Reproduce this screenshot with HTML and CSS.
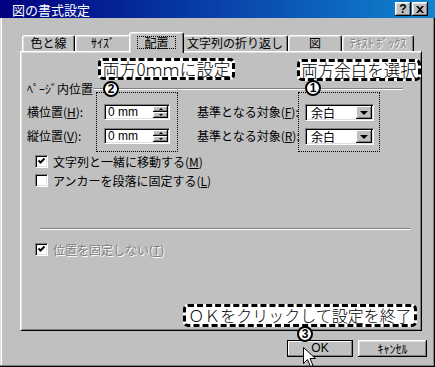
FILE: index.html
```html
<!DOCTYPE html>
<html lang="ja">
<head>
    <meta charset="UTF-8">
    <title>図の書式設定</title>
    <link rel="stylesheet" href="styles.css">
</head>
<body>
<div class="window">
    <div class="titlebar">
        <span class="title">図の書式設定</span>
        <div class="tb-buttons">
            <span class="tb-btn help">?</span>
            <span class="tb-btn">
                <svg width="8" height="7" viewBox="0 0 8 7"><path d="M0 0h2l2 2 2-2h2L5 3.5 8 7H6L4 5 2 7H0l3-3.5z" fill="#000"/></svg>
            </span>
        </div>
    </div>

    <div class="tabs">
        <div class="tab t1">色と線</div>
        <div class="tab t2">ｻｲｽﾞ</div>
        <div class="tab t3 active"><span class="focus">配置</span></div>
        <div class="tab t4">文字列の折り返し</div>
        <div class="tab t5">図</div>
        <div class="tab t6 disabled">ﾃｷｽﾄ ﾎﾞｯｸｽ</div>
    </div>

    <div class="panel">
        <div class="group-head">
            <span>ﾍﾟｰｼﾞ内位置</span>
            <div class="etch"></div>
        </div>

        <div class="pos-row">
            <div class="lbl-col">
                <label>横位置(<u>H</u>):</label>
                <label>縦位置(<u>V</u>):</label>
            </div>
            <div class="dot-box spins">
                <div class="spin"><span class="val">0 mm</span><span class="spin-btns"><i class="up"></i><i class="down"></i></span></div>
                <div class="spin"><span class="val">0 mm</span><span class="spin-btns"><i class="up"></i><i class="down"></i></span></div>
            </div>
            <div class="lbl-col right">
                <label>基準となる対象(<u>F</u>):</label>
                <label>基準となる対象(<u>R</u>):</label>
            </div>
            <div class="dot-box combos">
                <div class="combo"><span class="val">余白</span><span class="drop"><i></i></span></div>
                <div class="combo"><span class="val">余白</span><span class="drop"><i></i></span></div>
            </div>
        </div>

        <div class="check first">
            <span class="box"><svg width="9" height="9" viewBox="0 0 9 9"><polyline points="1.5,3.5 3.5,5.5 7.5,1.5" fill="none" stroke="#000" stroke-width="2"/></svg></span>
            <span>文字列と一緒に移動する(<u>M</u>)</span>
        </div>
        <div class="check second">
            <span class="box"></span>
            <span>アンカーを段落に固定する(<u>L</u>)</span>
        </div>

        <div class="sep"></div>

        <div class="check third disabled">
            <span class="box"><svg width="9" height="9" viewBox="0 0 9 9"><polyline points="1.5,3.5 3.5,5.5 7.5,1.5" fill="none" stroke="#000" stroke-width="2"/></svg></span>
            <span>位置を固定しない(<u>T</u>)</span>
        </div>
    </div>

    <div class="buttons">
        <button class="btn default">OK</button>
        <button class="btn cancel">ｷｬﾝｾﾙ</button>
    </div>

    <!-- annotations drawn over the dialog -->
    <div class="callout c1">両方0ｍｍに設定</div>
    <div class="callout c2">両方余白を選択</div>
    <div class="callout c3">ＯＫをクリックして設定を終了</div>
    <span class="num n2">2</span>
    <span class="num n1">1</span>
    <span class="num n3">3</span>
    <svg class="cursor" width="13" height="21" viewBox="0 0 13 21">
        <path d="M0.5 0.5v16l4-4 3 7 2.5-1-3-7h5.5z" fill="#fff" stroke="#000" stroke-width="1"/>
    </svg>
</div>
</body>
</html>
```

FILE: styles.css
```css
body {
    margin: 0;
    background: #c0c0c0;
    font-family: "Noto Sans CJK JP", "Liberation Sans", sans-serif;
    font-size: 12px;
    color: #000;
}

.window {
    position: relative;
    width: 435px;
    height: 367px;
    box-sizing: border-box;
    background: #c0c0c0;
    overflow: hidden;
    box-shadow: inset -1px -1px #000, inset -2px -2px #808080, inset 1px 0 #dfdfdf, inset 2px 0 #fff;
}

/* title bar */
.titlebar {
    height: 18px;
    display: flex;
    align-items: center;
    justify-content: space-between;
    background: linear-gradient(to right, #000080, #1084d0);
    padding: 0 7px 0 12px;
}
.title {
    color: #fff;
    font-size: 13px;
    line-height: 18px;
    padding-top: 2px;
}
.tb-buttons {
    display: flex;
    gap: 1px;
}
.tb-btn {
    width: 16px;
    height: 14px;
    box-sizing: border-box;
    display: flex;
    align-items: center;
    justify-content: center;
    background: #c0c0c0;
    box-shadow: inset -1px -1px #000, inset 1px 1px #fff, inset -2px -2px #808080, inset 2px 2px #dfdfdf;
}
.tb-btn.help {
    font-family: "Liberation Sans", sans-serif;
    font-weight: bold;
    font-size: 12px;
    line-height: 14px;
}

/* tabs */
.tabs {
    display: flex;
    align-items: flex-end;
    height: 19px;
    margin-top: 14px;
    padding-left: 22px;
}
.tab {
    height: 16px;
    box-sizing: border-box;
    border-top: 1px solid #fff;
    border-left: 1px solid #fff;
    border-right: 1px solid #000;
    border-radius: 3px 3px 0 0;
    box-shadow: inset -1px 0 #808080, inset 1px 1px #dfdfdf;
    text-align: center;
    line-height: 14px;
    white-space: nowrap;
}
.t1 { width: 53px; }
.t2 { width: 56px; }
.t3 { width: 55px; }
.t4 { width: 106px; }
.t5 { width: 54px; }
.t6 { width: 72px; }
.tab.active {
    position: relative;
    z-index: 2;
    height: 21px;
    margin: 0 -2px -2px;
    padding-top: 3px;
    background: #c0c0c0;
}
.focus {
    display: inline-block;
    padding: 0 6px;
    line-height: 11px;
    border: 1px dotted #000;
}
.disabled {
    color: #808080;
    text-shadow: 1px 1px #fff;
}

/* property sheet */
.panel {
    width: 402px;
    height: 280px;
    margin-left: 20px;
    box-sizing: border-box;
    border: 1px solid;
    border-color: #fff #000 #000 #fff;
    box-shadow: inset 1px 1px #dfdfdf, inset -1px -1px #808080;
    padding-left: 6px;
}

.group-head {
    display: flex;
    align-items: center;
    height: 14px;
    line-height: 14px;
    margin: 30px 18px 0 0;
}
.etch {
    flex: 1;
    border-top: 1px solid #808080;
    border-bottom: 1px solid #fff;
    margin-left: 1px;
}

.pos-row {
    display: flex;
    margin-top: -4px;
}
.lbl-col {
    width: 69px;
    display: flex;
    flex-direction: column;
    gap: 8px;
    padding-top: 12px;
}
.lbl-col label {
    height: 16px;
    line-height: 16px;
    white-space: nowrap;
}
.lbl-col.right {
    width: 101px;
    margin-left: 19px;
}
.dot-box {
    width: 82px;
    height: 60px;
    box-sizing: border-box;
    border: 1px dotted #000;
    display: flex;
    flex-direction: column;
    padding: 11px 0 0 7px;
    gap: 8px;
}
.dot-box.combos {
    padding-left: 6px;
    gap: 7px;
}

.spin, .combo {
    box-sizing: border-box;
    display: flex;
    align-items: center;
    justify-content: space-between;
    background: #fff;
    border: 1px solid;
    border-color: #808080 #fff #fff #808080;
    box-shadow: inset 1px 1px #000, inset -1px -1px #dfdfdf;
}
.spin {
    width: 66px;
    height: 16px;
}
.combo {
    width: 69px;
    height: 17px;
}
.val {
    padding-left: 3px;
    line-height: 14px;
}
.spin .val {
    font-family: "Liberation Sans", sans-serif;
}
.combo .val {
    padding-left: 5px;
}
.spin-btns {
    display: flex;
    flex-direction: column;
    width: 15px;
    height: 12px;
    margin-right: 1px;
}
.spin-btns i, .drop {
    display: flex;
    align-items: center;
    justify-content: center;
    background: #c0c0c0;
    box-shadow: inset -1px -1px #000, inset 1px 1px #fff, inset -2px -2px #808080;
}
.spin-btns i {
    height: 6px;
}
.spin-btns i::after {
    content: "";
    border-left: 2px solid transparent;
    border-right: 2px solid transparent;
}
.spin-btns .up::after {
    border-bottom: 2px solid #000;
}
.spin-btns .down::after {
    border-top: 2px solid #000;
}
.drop {
    width: 16px;
    height: 13px;
    margin-right: 1px;
}
.drop i {
    border-left: 4px solid transparent;
    border-right: 4px solid transparent;
    border-top: 4px solid #000;
}

/* checkboxes */
.check {
    display: flex;
    align-items: center;
    gap: 5px;
    height: 13px;
    line-height: 13px;
    margin-left: 8px;
    white-space: nowrap;
}
.check.first { margin-top: 3px; }
.check.second { margin-top: 6px; }
.check.third { margin-top: 13px; }
.box {
    width: 13px;
    height: 13px;
    box-sizing: border-box;
    display: flex;
    align-items: center;
    justify-content: center;
    background: #fff;
    border: 1px solid;
    border-color: #808080 #fff #fff #808080;
    box-shadow: inset 1px 1px #000, inset -1px -1px #dfdfdf;
}

.sep {
    width: 370px;
    margin: 41px 0 0 13px;
    border-top: 1px solid #808080;
    border-bottom: 1px solid #fff;
}

/* dialog buttons */
.buttons {
    display: flex;
    justify-content: flex-end;
    gap: 5px;
    margin: 9px 8px 0 0;
}
.btn {
    height: 17px;
    padding: 0;
    border: none;
    background: #c0c0c0;
    font-family: inherit;
    font-size: 12px;
    line-height: 15px;
    box-shadow: inset -1px -1px #000, inset 1px 1px #fff, inset -2px -2px #808080, inset 2px 2px #dfdfdf;
}
.btn.default {
    width: 66px;
    font-family: "Liberation Sans", sans-serif;
    box-shadow: inset 0 0 0 1px #000, inset -2px -2px #808080, inset 2px 2px #fff;
}
.btn.cancel {
    width: 69px;
}

/* annotations */
.callout {
    position: absolute;
    z-index: 5;
    box-sizing: border-box;
    background: #fff;
    border: 3px dashed #000;
    border-radius: 5px;
    white-space: nowrap;
    text-align: center;
    font-weight: 300;
}
.c1 {
    left: 98px;
    top: 58px;
    width: 137px;
    height: 22px;
    font-size: 17px;
    line-height: 16px;
}
.c2 {
    left: 297px;
    top: 59px;
    width: 124px;
    height: 22px;
    font-size: 16.5px;
    line-height: 16px;
}
.c3 {
    left: 183px;
    top: 304px;
    width: 234px;
    height: 23px;
    font-size: 16px;
    line-height: 17px;
}
.num {
    position: absolute;
    z-index: 6;
    width: 16px;
    height: 16px;
    box-sizing: border-box;
    border: 2px solid #000;
    border-radius: 50%;
    background: #fff;
    font-family: "Liberation Sans", sans-serif;
    font-weight: bold;
    font-size: 12px;
    line-height: 12px;
    text-align: center;
}
.n2 { left: 103px; top: 81px; }
.n1 { left: 305px; top: 80px; }
.n3 { left: 297px; top: 326px; }
.cursor {
    position: absolute;
    z-index: 7;
    left: 303px;
    top: 347px;
}
```
